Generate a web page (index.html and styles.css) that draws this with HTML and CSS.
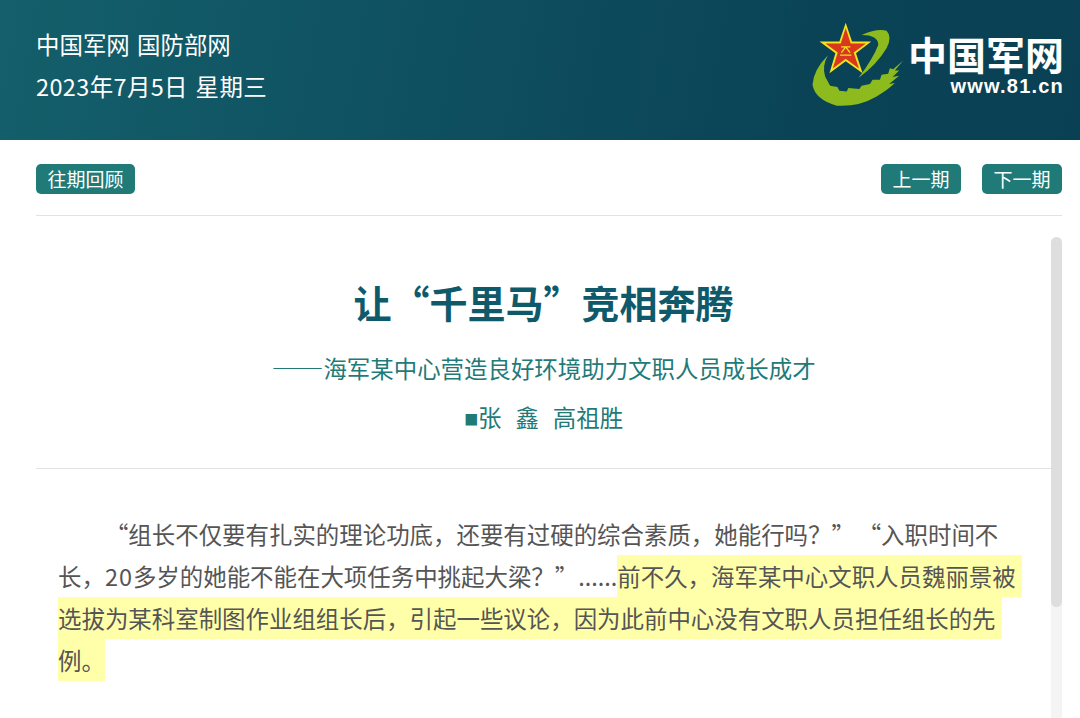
FILE: index.html
```html
<!DOCTYPE html>
<html lang="zh-CN">
<head>
    <meta charset="UTF-8">
    <meta name="viewport" content="width=device-width, initial-scale=1.0">
    <title>让“千里马”竞相奔腾</title>
    <link rel="stylesheet" href="styles.css">
</head>
<body>
    <header class="top">
        <div class="top-info">
            <div>中国军网 国防部网</div>
            <div class="date">2023年7月5日 星期三</div>
        </div>
        <div class="logo">
            <svg class="logo-mark" viewBox="90 60 285 265" width="95" height="88">
                <path fill="#8dbb1e" d="M245 105 Q290 85 320 92 Q338 110 320 145 Q290 195 235 235 Q280 175 295 135 Q295 105 245 105Z"/>
                <path fill="#8dbb1e" d="M143 167 Q100 210 97 255 Q105 300 170 318 Q235 322 290 290 Q325 270 345 250 L328 253 L358 228 L338 232 L358 212 L345 212 L370 182 L340 208 L330 205 L325 222 L305 225 L300 240 L278 240 L270 253 L245 258 L238 268 L205 265 L200 275 L178 273 L172 262 L150 258 L135 230 Q125 200 143 167Z"/>
                <path fill="#f5e11e" d="M197 68 L216 125 L274 125 L228 160 L248 220 L197 184 L148 220 L166 160 L118 125 L178 125Z"/>
                <path fill="#d8381e" d="M197 84 L212 131 L258 131 L221 158 L237 206 L197 177 L158 206 L173 158 L136 131 L182 131Z"/>
                <path fill="none" stroke="#f5e11e" stroke-width="4" d="M183 141 H211 M197 141 L184 158 M197 141 L210 158 M180 166 H214"/>
            </svg>
            <div class="logo-text">
                <div class="logo-name">中国军网</div>
                <div class="logo-url">www.81.cn</div>
            </div>
        </div>
    </header>

    <main class="content">
        <nav class="toolbar">
            <a class="btn">往期回顾</a>
            <div class="toolbar-right">
                <a class="btn">上一期</a>
                <a class="btn">下一期</a>
            </div>
        </nav>

        <div class="scroller">
            <article class="article">
                <div class="head">
                    <h1>让“千里马”竞相奔腾</h1>
                    <p class="sub"><span class="dash">——</span>海军某中心营造良好环境助力文职人员成长成才</p>
                    <p class="author"><span class="square">■</span>张&nbsp;&nbsp;鑫&nbsp;&nbsp;高祖胜</p>
                </div>
                <p class="text">“组长不仅要有扎实的理论功底，还要有过硬的综合素质，她能行吗？” “入职时间不<br>长，<span class="num">20</span>多岁的她能不能在大项任务中挑起大梁？”......<span class="mark line-end">前不久，海军某中心文职人员魏丽景被</span><br><span class="mark line-end">选拔为某科室制图作业组组长后，引起一些议论，因为此前中心没有文职人员担任组长的先</span><br><span class="mark">例。</span></p>
            </article>
            <div class="scrollbar"><div class="thumb"></div></div>
        </div>
    </main>
</body>
</html>
```

FILE: styles.css
```css
* {
    box-sizing: border-box;
}
html, body {
    height: 718px;
    overflow: hidden;
}
body {
    margin: 0;
    background-color: #fff;
    font-family: "Noto Sans CJK SC", "Liberation Sans", sans-serif;
}
.top {
    height: 140px;
    padding: 23px 16px 0 36px;
    display: flex;
    justify-content: space-between;
    align-items: flex-start;
    background: linear-gradient(100deg, #145f6b 0%, #0a4356 75%, #0a4054 100%);
    color: #fff;
}
.top-info {
    font-size: 23.45px;
    line-height: 42px;
    word-spacing: 2px;
}
.date {
    letter-spacing: 0.4px;
}
.logo {
    display: flex;
    align-items: flex-start;
    gap: 3px;
}
.logo-mark {
    display: block;
    margin-top: -3px;
}
.logo-text {
    color: #fff;
    text-align: right;
    font-weight: bold;
    padding-top: 7px;
}
.logo-name {
    font-size: 39px;
    line-height: 46px;
}
.logo-url {
    font-family: "Liberation Sans", sans-serif;
    font-size: 20px;
    line-height: 20px;
    letter-spacing: 1.2px;
}
.content {
    padding: 24px 18px 0 36px;
}
.toolbar {
    display: flex;
    justify-content: space-between;
    padding-bottom: 21px;
    border-bottom: 1px solid #e2e2e2;
}
.toolbar-right {
    display: flex;
    gap: 21px;
}
.btn {
    display: block;
    height: 30px;
    padding: 0 11.5px;
    border-radius: 5px;
    background-color: #1f7a78;
    color: #fff;
    font-size: 19px;
    line-height: 30px;
}
.scroller {
    display: flex;
    padding-top: 21px;
}
.article {
    width: 1015px;
}
.head {
    height: 232px;
    padding-top: 37px;
    border-bottom: 1px solid #e2e2e2;
    text-align: center;
    color: #1f7a78;
}
h1 {
    margin: 0;
    font-size: 38px;
    line-height: 56px;
    color: #0e5a6a;
}
.sub {
    margin: 12px 0 0;
    font-size: 23.45px;
    line-height: 50px;
}
.dash {
    font-size: 26px;
}
.author {
    margin: -1px 0 0;
    font-size: 23.45px;
    line-height: 50px;
    word-spacing: 1.7px;
}
.square {
    font-family: "Liberation Sans", sans-serif;
}
.text {
    width: 975px;
    margin: 44px 0 0 22px;
    font-size: 23.45px;
    line-height: 42px;
    text-indent: 2em;
    word-spacing: -2.5px;
    color: #555;
}
.num {
    letter-spacing: 1px;
}
.mark {
    padding: 4px 0;
    background-color: #ffffaa;
}
.line-end {
    padding-right: 6.5px;
}
.scrollbar {
    width: 11px;
    height: 481px;
    border-radius: 6px 6px 0 0;
    background-color: #f4f4f4;
}
.thumb {
    height: 370px;
    border-radius: 6px;
    background-color: #dedede;
}
```
